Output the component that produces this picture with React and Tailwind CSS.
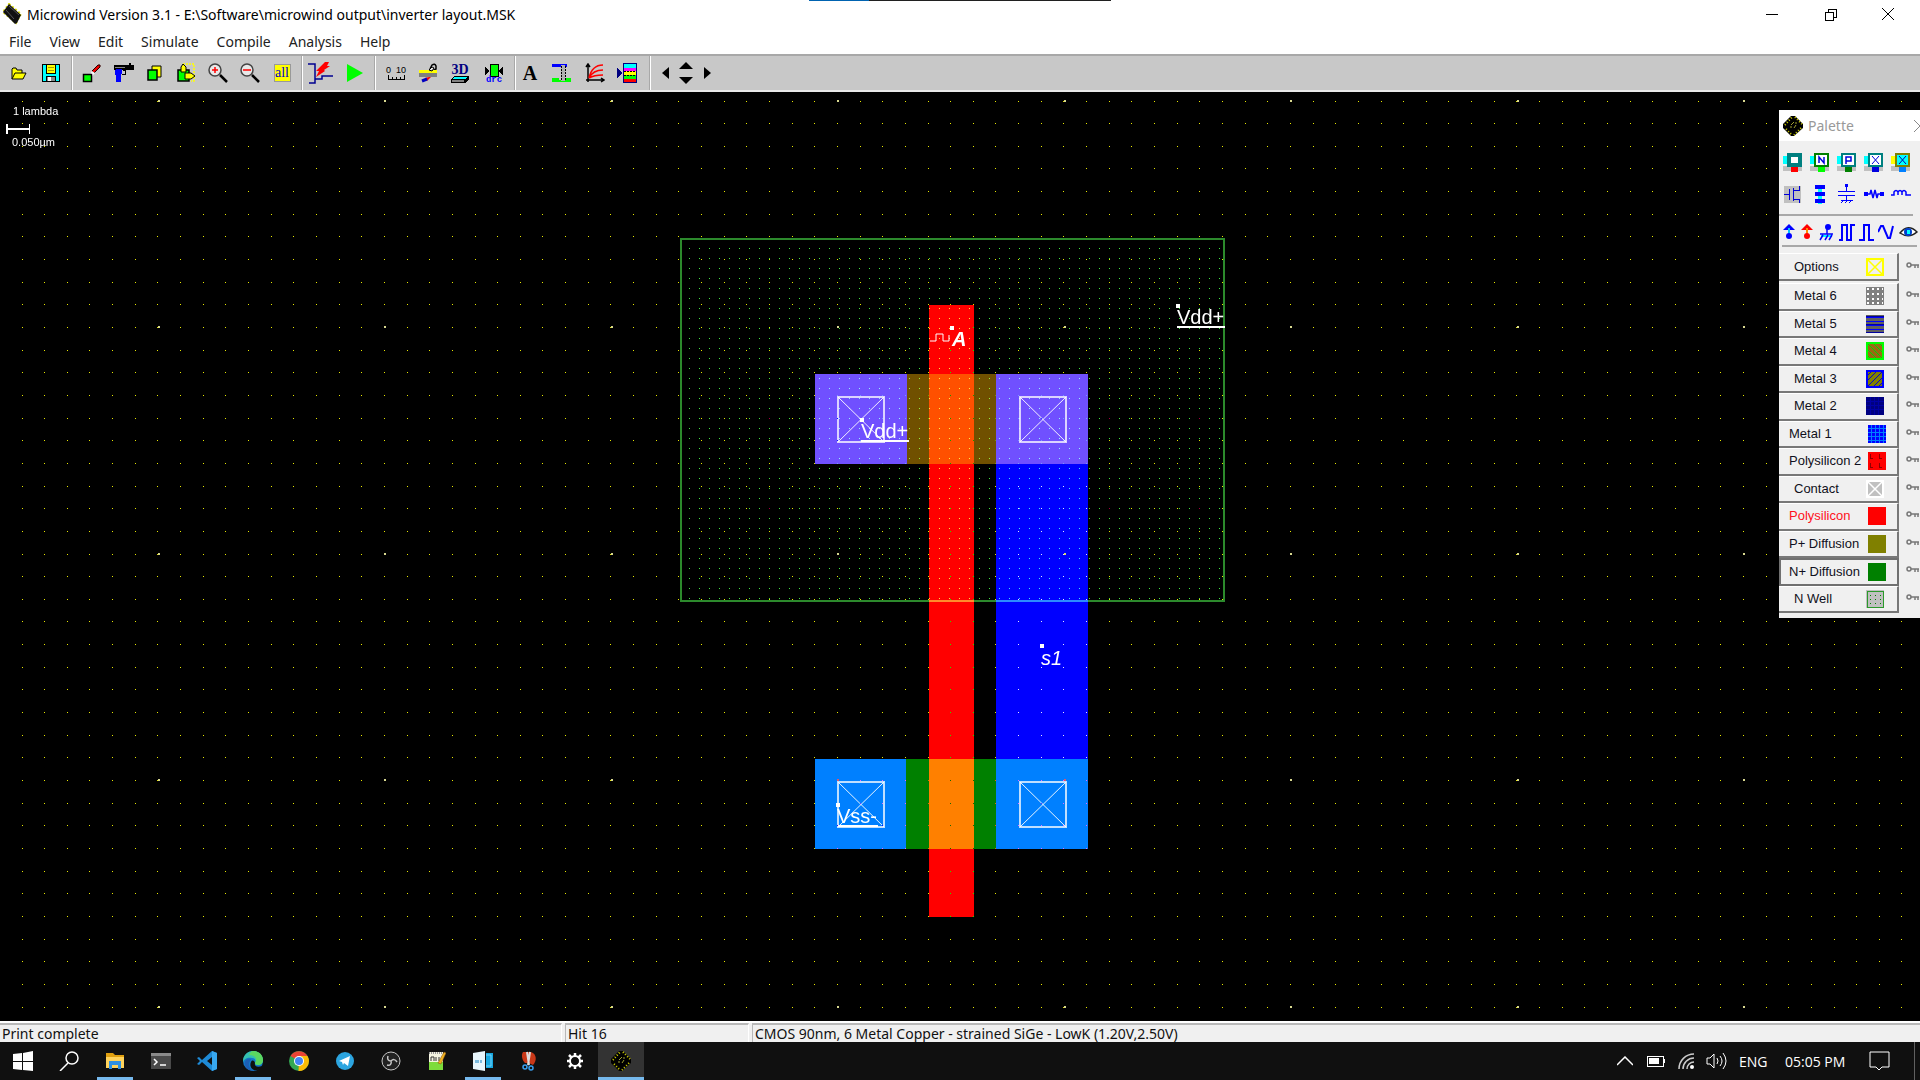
import React from "react";

/* ---------- shared glyphs ---------- */

function ChipIcon({ size = 20 }) {
  return (
    <svg width={size} height={size} viewBox="0 0 20 20" aria-hidden="true">
      <path d="M8 0h4l8 8v4l-9 8H8l-8-8V8z" fill="#000" />
      <path d="M2 9l7-8M12 1l7 7M18 12l-7 7M8 18l-6-6" fill="none" stroke="#d0d000" strokeWidth="2" strokeDasharray="1 2" />
      <path d="M9 3l7 6-6 8-7-7z" fill="#000" />
      <path d="M8 9l3 -3M11 12l2-3M7 11h2M12 7h2" stroke="#a0a030" strokeWidth="1" />
    </svg>
  );
}

function TitleChip() {
  return (
    <svg width="20" height="22" viewBox="0 0 20 22" aria-hidden="true">
      <path d="M7 1l12 10-5 9L1 9z" fill="none" stroke="#d8d800" strokeWidth="2" strokeDasharray="2 2" />
      <path d="M7 1l12 11-4 8-2 1L1 9z" fill="#111" />
      <path d="M7 3l10 9M4 7l8 9" stroke="#555" strokeWidth="1" />
    </svg>
  );
}

const Art = ({ w = 20, h = 20, children, crisp = true }) => (
  <svg width={w} height={h} viewBox={`0 0 ${w} ${h}`} fill="none" shapeRendering={crisp ? "crispEdges" : "auto"} aria-hidden="true">
    {children}
  </svg>
);

/* ---------- toolbar ---------- */

const toolbarGroups = [
  {
    cls: "pl-[3px] w-[71px]",
    items: [
      ["Open", "w-8", (
        <Art w={16} h={16} crisp={false}>
          <path d="M1 14V4l1-1h3l1 2h5v3" fill="#ff0" stroke="#000" />
          <path d="M1 14l3-6h11l-3 6z" fill="#ff0" stroke="#000" />
        </Art>
      )],
      ["Save", "w-8", (
        <Art w={18} h={18}>
          <path d="M0 0h18v18H0z" fill="#000" />
          <path d="M1 1h3v9h10V1h3v16h-3v-5H4v5H1z" fill="#0ff" />
          <path d="M5 1h8v8H5z" fill="#ff0" />
          <path d="M6 3h6v1H6zM6 6h6v1H6z" fill="#a0a000" />
          <path d="M5 13h8v4H5z" fill="#888" />
          <path d="M6 13h3v4H6z" fill="#fff" />
        </Art>
      )],
    ],
  },
  {
    cls: "pl-[3px] w-[228px]",
    items: [
      ["Draw box", "w-8", (
        <Art w={20} h={20} crisp={false}>
          <path d="M10 8l6-6q3-1 2 2l-6 6z" fill="#e00" stroke="#200" strokeWidth="1" />
          <path d="M8 12l2-4 3 2-3 3z" fill="#fff" />
          <path d="M1.500 11.500h8v7h-8z" fill="#0f0" stroke="#000" strokeWidth="1.500" />
        </Art>
      )],
      ["Delete", "w-8", (
        <Art w={20} h={20}>
          <path d="M0 2h15V0h2v2h3v5h-8v1H9V7H0z" fill="#000" />
          <path d="M2 6h6v5H7v8H2v-7H1V8z" fill="#00f" />
          <path d="M8 11h3V8" stroke="#000" />
          <path d="M1 4h10" stroke="#888" />
        </Art>
      )],
      ["Copy", "w-[30px]", (
        <Art w={16} h={18} crisp={false}>
          <path d="M5 2h9v11H5z" fill="#ff0" stroke="#000" />
          <path d="M1 6h9v10H1z" fill="#0f0" stroke="#000" strokeWidth="1.500" />
        </Art>
      )],
      ["Move", "w-8", (
        <Art w={20} h={20} crisp={false}>
          <path d="M2 7h11v11H2z" fill="#0f0" stroke="#000" strokeWidth="1.500" />
          <path d="M7 1h11v17h-3" stroke="#ff0" strokeDasharray="2 1" strokeWidth="1.500" />
          <path d="M5 9V4l2-3 3 3v5z" fill="#ff0" stroke="#000" />
          <path d="M9 10h6l4 3-4 3H9z" fill="#ff0" stroke="#000" />
        </Art>
      )],
      ["Zoom in", "w-8", (
        <Art w={20} h={20} crisp={false}>
          <circle cx="7" cy="7" r="6" fill="#e8e8e8" stroke="#444" strokeWidth="1.500" />
          <path d="M4 7h6M7 4v6" stroke="#f00" strokeWidth="1.500" />
          <path d="M12 12l7 7" stroke="#000" strokeWidth="2.500" />
        </Art>
      )],
      ["Zoom out", "w-8", (
        <Art w={20} h={20} crisp={false}>
          <circle cx="7" cy="7" r="6" fill="#e8e8e8" stroke="#444" strokeWidth="1.500" />
          <path d="M3 7h8" stroke="#f00" strokeWidth="1.500" />
          <path d="M12 12l7 7" stroke="#000" strokeWidth="2.500" />
        </Art>
      )],
      ["View all", "w-8", (
        <span className="flex h-[18px] w-[17px] items-center justify-center border border-[#999] bg-[#ff0] font-['Liberation_Serif',serif] text-[14px] leading-none text-[#0000d0]">all</span>
      )],
    ],
  },
  {
    cls: "w-[71px]",
    items: [
      ["Simulate", "w-9", (
        <Art w={26} h={24} crisp={false}>
          <path d="M0 3h7v19H1M7 18h7v-3h11" stroke="#000090" strokeWidth="1.500" />
          <path d="M17 1l4 0-2 4 3 0-6 4 1 1-9 6 3-6-3 0z" fill="#f00" />
        </Art>
      )],
      ["Run", "w-8", (
        <Art w={18} h={18} crisp={false}>
          <path d="M1 0l16 9-16 9z" fill="#0f0" />
        </Art>
      )],
    ],
  },
  {
    cls: "pl-1 w-[138px]",
    items: [
      ["Measure", "w-8", (
        <span className="flex flex-col items-center whitespace-pre font-['Liberation_Sans',sans-serif] text-[9px] leading-[9px]">
          0  10
          <Art w={18} h={5}><path d="M1 0v4h16V0M5 2v2M9 2v2M13 2v2" stroke="#000" /></Art>
        </span>
      )],
      ["Process section", "w-8", (
        <Art w={20} h={20} crisp={false}>
          <path d="M12 6l2-4q3-2 4 1v3l-4 2" stroke="#000" strokeWidth="1.500" />
          <path d="M7 15l4-1 2 0-4 4z" fill="#f00" />
          <path d="M4 18l5-2" stroke="#0000c0" strokeWidth="3" />
          <path d="M1 7h18v3H1z" fill="#ff0" />
          <path d="M11 7l3-3 2 1-2 3z" fill="#e8e8e8" stroke="#000" />
          <path d="M1 10h18v4H1z" fill="#808080" />
        </Art>
      )],
      ["3D view", "w-8", (
        <span className="flex flex-col items-center">
          <span className="font-['Liberation_Serif',serif] text-[14px] font-bold leading-[13px] text-[#000080]">3D</span>
          <Art w={18} h={7}>
            <path d="M0 3l3-3h15v3l-3 4H0z" fill="#000" />
            <path d="M3 1h13l-2 2H2z" fill="#0ff" />
            <path d="M1 4h12v2H1z" fill="#808080" />
          </Art>
        </span>
      )],
      ["Design rule check", "w-9", (
        <span className="flex flex-col items-center">
          <Art w={18} h={14}>
            <path d="M5 1h8v12H5z" fill="#0f0" stroke="#000" />
            <path d="M0 4l5 4-5 4zM18 4l-5 4 5 4z" fill="#000" />
          </Art>
          <span className="font-['Liberation_Mono',monospace] text-[9px] font-bold leading-[6px] text-[#00f]">drc</span>
        </span>
      )],
    ],
  },
  {
    cls: "w-[133px]",
    items: [
      ["Add text", "w-7", <span className="font-['Liberation_Serif',serif] text-[20px] font-bold leading-none">A</span>],
      ["Via", "w-9", (
        <Art w={20} h={20}>
          <path d="M0 1h15v3H0z" fill="#00f" />
          <path d="M0 15h7v4H0zM13 15h6v4h-6z" fill="#0f0" />
          <path d="M4 17h12v2H4z" fill="#0f0" />
          <path d="M9 2h4v16H9z" fill="#b0b0b0" />
          <path d="M9 3v15M13 3v15" stroke="#000" strokeDasharray="2 1" />
        </Art>
      )],
      ["MOS characteristics", "w-[30px]", (
        <Art w={20} h={20} crisp={false}>
          <path d="M3 19V1M1 4l2-3 2 3M1 17h18M16 15l3 2-3 2" stroke="#000" strokeWidth="1.500" />
          <path d="M4 15Q7 2 18 2M4 15Q8 7 18 7M4 15Q9 12 18 12" stroke="#f00" strokeWidth="1.500" />
        </Art>
      )],
      ["Layers palette", "w-[34px]", (
        <Art w={20} h={20}>
          <path d="M0 5l6 5-6 5z" fill="#000080" />
          <path d="M6 0h14v20H6z" fill="#000080" />
          <path d="M7 1h12v4H7z" fill="#0ff" />
          <path d="M7 5h12v3H7z" fill="#f0f" />
          <path d="M7 8h12v4H7z" fill="#ff0" />
          <path d="M7 12h12v4H7z" fill="#0f0" />
          <path d="M7 16h12v3H7z" fill="#f00" />
          <path d="M7 8h12M7 12h12" stroke="#000" strokeDasharray="2 1" />
        </Art>
      )],
    ],
  },
];

function Toolbar() {
  return (
    <div role="toolbar" aria-label="Main toolbar" className="flex h-[38px] shrink-0 items-stretch border-b-2 border-t-2 border-b-[#e8e8e8] border-t-[#a8a8a8] bg-[#c8c8c8]">
      {toolbarGroups.map((g, i) => (
        <React.Fragment key={i}>
          <div className={`flex items-center ${g.cls}`}>
            {g.items.map(([name, w, icon]) => (
              <button key={name} type="button" aria-label={name} className={`flex h-8 shrink-0 items-center justify-center ${w}`}>
                {icon}
              </button>
            ))}
          </div>
          <div className="w-[2px] border-l border-l-[#a8a8a8] bg-white" />
        </React.Fragment>
      ))}
      <div className="flex items-center pl-1">
        <button type="button" aria-label="Scroll left" className="flex h-8 w-5 items-center justify-center">
          <Art w={7} h={12} crisp={false}><path d="M7 0v12L0 6z" fill="#000" /></Art>
        </button>
        <div className="flex w-[22px] flex-col items-center gap-2">
          <button type="button" aria-label="Scroll up"><Art w={14} h={7} crisp={false}><path d="M0 7h14L7 0z" fill="#000" /></Art></button>
          <button type="button" aria-label="Scroll down"><Art w={14} h={7} crisp={false}><path d="M0 0h14L7 7z" fill="#000" /></Art></button>
        </div>
        <button type="button" aria-label="Scroll right" className="flex h-8 w-5 items-center justify-center">
          <Art w={7} h={12} crisp={false}><path d="M0 0v12l7-6z" fill="#000" /></Art>
        </button>
      </div>
    </div>
  );
}

/* ---------- chip layout drawing ---------- */

// One grid step is a lambda; ten steps span 226.5 px.
const STEP = 453 / 20;
const gridPoint = (origin, k) => Math.floor(origin + k * STEP);

function dotsPath(x0, y0, cols, rows, every, size) {
  let d = "";
  for (let r = 0; r < rows; r += every)
    for (let c = 0; c < cols; c += every)
      d += `M${gridPoint(x0, c)} ${gridPoint(y0, r)}h${size}v${size}h-${size}z`;
  return d;
}
const minorDots = dotsPath(22, 9, 160, 90, 1, 1);
const majorDots = dotsPath(158, 8, 160, 90, 10, 2);

let wellDots = "";
for (let r = 0; r < 36; r++)
  for (let c = 0; c < 54; c++) wellDots += `M${689 + c * 10} ${156 + r * 10}h1v1h-1z`;

function Contact({ x, y }) {
  return (
    <g stroke="#fff" fill="none">
      <path d={`M${x} ${y}l46 45M${x + 46} ${y}l-46 45`} strokeOpacity="0.9" />
      <rect x={x} y={y} width="46" height="45" strokeWidth="2" strokeOpacity="0.75" />
    </g>
  );
}

function ChipLayout() {
  return (
    <svg role="img" aria-label="Inverter layout" className="isolate block h-full w-full font-['Liberation_Sans',Arial,sans-serif] text-[20px]">
      <g shapeRendering="crispEdges">
        <rect x="815" y="282" width="92" height="90" fill="#7050ff" />
        <rect x="907" y="282" width="90" height="90" fill="#705000" />
        <rect x="996" y="372" width="92" height="296" fill="#00f" />
        <rect x="996" y="282" width="92" height="90" fill="#7050ff" />
        <rect x="815" y="667" width="92" height="90" fill="#0080ff" />
        <rect x="906" y="667" width="91" height="90" fill="#008000" />
        <rect x="996" y="667" width="92" height="90" fill="#0080ff" />
        <rect x="929" y="213" width="45" height="612" fill="#f00" />
        <rect x="929" y="282" width="45" height="90" fill="#ff5000" />
        <rect x="929" y="667" width="45" height="90" fill="#ff8000" />
        <path d={wellDots} fill="#40e840" className="mix-blend-screen" />
        <rect x="681" y="147" width="543" height="362" fill="none" stroke="#2c8a2c" strokeWidth="2" className="mix-blend-screen" />
      </g>
      <Contact x={838} y={305} />
      <Contact x={1020} y={305} />
      <Contact x={838} y={690} />
      <Contact x={1020} y={690} />
      <g shapeRendering="crispEdges" className="mix-blend-difference">
        <path d={minorDots} fill="#e8e800" />
        <path d={majorDots} fill="#d8d890" />
      </g>
      <g fill="#fff">
        <text x="1177" y="232">Vdd+</text>
        <path d="M1177 234h48v2h-48zM1176 212h4v4h-4z" />
        <text x="861" y="346">Vdd+</text>
        <path d="M861 348h48v2h-48zM860 326h4v4h-4z" />
        <text x="952" y="254" className="font-bold italic">A</text>
        <path d="M950 234h4v4h-4z" />
        <text x="1041" y="573" className="italic">s1</text>
        <path d="M1040 552h4v4h-4z" />
        <text x="837" y="731">Vss-</text>
        <path d="M838 733h40v2h-40zM836 711h4v4h-4z" />
        <path d="M930 249h6v-7h7v7h6v-6" fill="none" stroke="#fff" />
      </g>
      <g fill="#fff" className="text-[11px]">
        <text x="13" y="23">1 lambda</text>
        <text x="12" y="54">0.050µm</text>
        <path d="M6 32h2v10H6zM29 32h1v10h-1zM7 36h23v2H7z" />
      </g>
    </svg>
  );
}

/* ---------- palette window ---------- */

const blue = "#0000ff";

function ContactTool({ ring, tab, foot, mark, core = "#fff" }) {
  return (
    <Art w={19} h={19}>
      <path d="M0 13h19v5H0z" fill="#c0c0c0" />
      <path d="M0 3h6v8H0z" fill={tab} />
      <path d="M8 14h7v5H8z" fill={foot} />
      <path d="M5 1h13v12H5z" fill={core} stroke={ring} strokeWidth="2" />
      {mark}
    </Art>
  );
}

const toolRows = [
  [
    ["Contact poly / metal", <ContactTool ring="#008080" tab="#0ff" foot="#f00" mark={<path d="M7 3h9v8H7z" stroke="#008080" strokeWidth="2" />} />],
    ["Contact N+ / metal", <ContactTool ring="#008000" tab="#0ff" foot="#0f0" mark={<path d="M9 10V4l5 6V4" stroke="#00d" shapeRendering="auto" strokeWidth="1.500" />} />],
    ["Contact P+ / metal", <ContactTool ring="#008080" tab="#0ff" foot="#008000" mark={<path d="M9 11V4h5v4H9" stroke="#00d" shapeRendering="auto" strokeWidth="1.500" />} />],
    ["Via", <ContactTool ring="#008080" tab="#0ff" foot="#0000e0" mark={<path d="M8 3l7 8M15 3l-7 8" stroke="#00d" shapeRendering="auto" />} />],
    ["Stacked contacts", <ContactTool ring="#808000" tab="#ff0" foot="#0080ff" core="#0ff" mark={<path d="M8 3l7 8M15 3l-7 8" stroke="#00a" shapeRendering="auto" />} />],
  ],
  [
    ["MOS generator", (
      <Art w={19} h={19}>
        <path d="M1 1h17v17H1z" fill="#c0c0c0" />
        <path d="M1 9h5M6 4v11M10 3v13M10 5h6V1M10 14h6v4" stroke="#0000d8" />
      </Art>
    )],
    ["Bus", (
      <Art w={19} h={19}>
        <path d="M8 3h4v16H8z" fill="#0ff" />
        <path d="M5 0h10v4H5zM5 7h10v4H5zM5 14h10v4H5z" fill={blue} />
      </Art>
    )],
    ["Capacitor", (
      <Art w={19} h={20}>
        <path d="M8 0h3v3H8z" fill={blue} />
        <path d="M9 2v5M1 7h17M1 11h17M9 11v5M4 16h12M4 19l3-3M8 19l3-3M12 19l3-3" stroke={blue} />
      </Art>
    )],
    ["Resistor", (
      <Art w={20} h={12} crisp={false}>
        <path d="M0 4h4v4H0zM16 4h4v4h-4z" fill={blue} />
        <path d="M3 6h3l1-4 2 8 2-8 2 8 1-4h3" stroke={blue} strokeWidth="1.500" />
      </Art>
    )],
    ["Inductor", (
      <Art w={20} h={12} crisp={false}>
        <path d="M0 7h3V4q2-3 4 0v3M7 4q2-3 4 0v3M11 4q2-3 4 0v3h5" stroke={blue} strokeWidth="1.500" />
      </Art>
    )],
  ],
];

const signalTools = [
  ["Vdd supply", "w-[19px]", <Art w={12} h={16} crisp={false}><path d="M6 0l6 6H0z" fill={blue} /><path d="M6 4v6" stroke="#00c0ff" strokeWidth="2" /><circle cx="6" cy="12" r="3" fill={blue} /></Art>],
  ["High voltage supply", "w-[18px]", <Art w={12} h={16} crisp={false}><path d="M6 0l6 6H0z" fill="#f00" /><path d="M6 4v6" stroke="#f80" strokeWidth="2" /><circle cx="6" cy="12" r="3" fill="#f00" /></Art>],
  ["Ground", "w-5", <Art w={15} h={17} crisp={false}><circle cx="9" cy="3" r="3" fill={blue} /><path d="M2 12h11" stroke="#0ff" strokeWidth="2" /><path d="M8 5v5M1 10h13M1 16l3-5M6 16l3-5M10 16l3-5" stroke={blue} strokeWidth="1.500" /></Art>],
  ["Clock", "w-[22px]", <Art w={16} h={17}><path d="M0 16h3V1h5v15h4V1h4" stroke={blue} strokeWidth="2" /></Art>],
  ["Pulse", "w-[18px]", <Art w={16} h={17}><path d="M0 16h5V1h5v15h5" stroke={blue} strokeWidth="2" /></Art>],
  ["Sine", "w-5", <Art w={16} h={16} crisp={false}><path d="M0 8l3-6 2 0 5 12 2 0 3-12" stroke={blue} strokeWidth="2" /></Art>],
  ["Visible node", "w-6", <Art w={19} h={12} crisp={false}><path d="M1 7Q9-3 18 6Q10 13 1 7z" fill="#fff" stroke="#222" strokeWidth="1.500" /><circle cx="9" cy="6" r="4" fill="#0040d0" /><path d="M8 4h3v4H8z" fill="#0ff" /></Art>],
];

const wide = "pl-[15px] pr-[13px]";
const tight = "pl-[10px] pr-[11px]";

const Swatch = ({ fill, children }) => (
  <svg width="18" height="18" viewBox="0 0 18 18" shapeRendering="crispEdges" fill="none" aria-hidden="true">
    <path d="M0 0h18v18H0z" fill={fill} />
    {children}
  </svg>
);

const layers = [
  ["Metal 6", wide, (
    <Swatch fill="#808080"><path d="M1 2h16M1 7h16M1 12h16M1 16h16" stroke="#fff" strokeWidth="2" strokeDasharray="2 3" /></Swatch>
  )],
  ["Metal 5", wide, (
    <Swatch fill="#606060"><path d="M0 2h18M0 6h18M0 10h18M0 14h18" stroke="#00f" /><path d="M0 1h18M0 9h18M0 17h18" stroke="#0000a0" /></Swatch>
  )],
  ["Metal 4", wide, (
    <Swatch fill="#9a6a10"><path d="M1 1l16 16M1 7l10 10M1 13l4 4M7 1l10 10M13 1l4 4" stroke="#00d800" strokeWidth="1" shapeRendering="auto" /><path d="M1 1h16v16H1z" stroke="#0f0" strokeWidth="2" /></Swatch>
  )],
  ["Metal 3", wide, (
    <Swatch fill="#808000"><path d="M1 17L17 1M1 11L11 1M7 17L17 7M1 6l5-5M12 17l5-5" stroke="#0000d0" shapeRendering="auto" /><path d="M1 1h16v16H1z" stroke="#00f" strokeWidth="2" /></Swatch>
  )],
  ["Metal 2", wide, (
    <Swatch fill="#000080"><path d="M0 4h18M0 8h18M0 12h18M4 0v18M8 0v18M12 0v18" stroke="#0000a8" /></Swatch>
  )],
  ["Metal 1", tight, (
    <Swatch fill="#0000ff"><path d="M0 3h18M0 7h18M0 11h18M0 15h18M3 0v18M7 0v18M11 0v18M15 0v18" stroke="#0080ff" /></Swatch>
  )],
  ["Polysilicon 2", tight, (
    <Swatch fill="#ff0000"><path d="M2 2v4h3M11 2v4h3M2 11v4h3M11 11v4h3" stroke="#900000" /></Swatch>
  )],
  ["Contact", wide, (
    <Swatch fill="#c0c0c0"><path d="M1 1l16 16M17 1L1 17" stroke="#fff" strokeWidth="1.500" shapeRendering="auto" /><path d="M1 1h16v16H1z" stroke="#fff" strokeWidth="2" /></Swatch>
  )],
  ["Polysilicon", tight, <Swatch fill="#ff0000" />],
  ["P+ Diffusion", tight, <Swatch fill="#808000" />],
  ["N+ Diffusion", tight, <Swatch fill="#008000" />],
  ["N Well", wide, (
    <Swatch fill="#c0c0c0"><path d="M4 5h11M4 9h11M4 13h11" stroke="#008000" strokeDasharray="1 4" strokeWidth="1" /><path d="M1 1h16v16H1z" stroke="#2a9a2a" strokeWidth="1" /></Swatch>
  )],
];

function LayerRow({ label, pad, swatch, selected, focused }) {
  const frame = focused
    ? "outline-2 -outline-offset-2 outline-[#707070] border-2 border-transparent border-l-0"
    : "border-b-2 border-r-2 border-t border-b-[#787878] border-r-[#787878] border-t-[#fff]";
  return (
    <div className="flex min-h-0 flex-1 items-stretch gap-[7px]">
      <button
        type="button"
        aria-pressed={selected}
        className={`flex w-[120px] shrink-0 items-center justify-between bg-[#f0f0f0] text-[13px] leading-4 ${frame} ${pad} ${selected ? "text-[#ff1020]" : "text-[#101020]"}`}
      >
        <span className="whitespace-nowrap">{label}</span>
        {swatch}
      </button>
      <button type="button" aria-label={`Protect ${label}`} className="flex items-center pb-1">
        <Art w={13} h={7} crisp={false}>
          <circle cx="3" cy="3" r="2" stroke="#777" strokeWidth="1.500" />
          <path d="M5 3h8M9 3v3M12 3v3" stroke="#777" strokeWidth="1.500" />
        </Art>
      </button>
    </div>
  );
}

function Palette() {
  return (
    <aside aria-label="Palette" className="absolute right-0 top-[18px] w-[141px] overflow-hidden bg-[#f0f0f0] pb-[5px] font-['Liberation_Sans',Arial,sans-serif]">
      <header className="flex h-[31px] items-center gap-[5px] bg-white pl-1">
        <ChipIcon />
        <h2 className="flex-1 font-['Noto_Sans',sans-serif] text-[14px] leading-5 text-[#999]">Palette</h2>
        <button type="button" aria-label="Close palette" className="-mr-[6px]">
          <Art w={12} h={12} crisp={false}><path d="M0 0l12 12M12 0L0 12" stroke="#888" /></Art>
        </button>
      </header>
      {toolRows.map((row, i) => (
        <div key={i} className="mt-[10px] flex h-[22px] items-center">
          {row.map(([name, icon]) => (
            <button key={name} type="button" aria-label={name} className="flex w-[27px] shrink-0 items-center justify-center">{icon}</button>
          ))}
        </div>
      ))}
      <div className="mr-[7px] mt-[9px] h-[2px] bg-[#a8a8a8]" />
      <div className="mt-[5px] flex h-[22px] items-center">
        {signalTools.map(([name, w, icon]) => (
          <button key={name} type="button" aria-label={name} className={`flex shrink-0 items-center justify-center ${w}`}>{icon}</button>
        ))}
      </div>
      <div className="ml-[3px] mr-[3px] mt-[2px] h-[2px] bg-[#a8a8a8]" />
      <div className="mt-[6px] flex h-[28px] flex-col">
        <LayerRow
          label="Options"
          pad={wide}
          swatch={<Swatch fill="#f0f0f0"><path d="M1 1l16 16M17 1L1 17" stroke="#ff0" strokeWidth="1.500" shapeRendering="auto" /><path d="M1 1h16v16H1z" stroke="#ff0" strokeWidth="2" /></Swatch>}
        />
      </div>
      <div className="mt-[2px] flex h-[330px] flex-col">
        {layers.map(([label, pad, swatch]) => (
          <LayerRow key={label} label={label} pad={pad} swatch={swatch} selected={label === "Polysilicon"} focused={label === "N+ Diffusion"} />
        ))}
      </div>
    </aside>
  );
}

/* ---------- taskbar ---------- */

const taskItems = [
  ["Start", "", (
    <Art w={20} h={20} crisp={false}><path d="M0 3l9-1v8H0zM10 2l10-2v10H10zM0 11h9v8l-9-1zM10 11h10v9l-10-1z" fill="#fff" /></Art>
  )],
  ["Search", "", (
    <Art w={20} h={20} crisp={false}><circle cx="13" cy="7" r="6" stroke="#fff" strokeWidth="1.500" /><path d="M9 12l-8 8" stroke="#fff" strokeWidth="1.500" /></Art>
  )],
  ["File Explorer", "open", (
    <Art w={20} h={18} crisp={false}><path d="M1 1h7l2 2h9v4H1z" fill="#e0a010" /><path d="M1 5h18v11H1z" fill="#ffd35c" /><path d="M4 9h12v8h-3v-4H7v4H4z" fill="#2f8fe0" /></Art>
  )],
  ["Terminal", "", (
    <Art w={20} h={18} crisp={false}><path d="M0 1h20v16H0z" fill="#4a4a4a" /><path d="M0 1h20v3H0z" fill="#8a8a8a" /><path d="M3 7l3 3-3 3M9 13h6" stroke="#fff" strokeWidth="1.500" /></Art>
  )],
  ["Visual Studio Code", "", (
    <Art w={20} h={20} crisp={false}><path d="M15 0l5 2v16l-5 2L5 11l-3 3-2-1 3-3-3-3 2-1 3 3zM15 6l-5 4 5 4z" fill="#1e8ad6" fillRule="evenodd" /><path d="M15 0l5 2v16l-5 2z" fill="#38a8f0" /></Art>
  )],
  ["Microsoft Edge", "open", (
    <svg width="20" height="20" viewBox="0 0 20 20" aria-hidden="true">
      <circle cx="10" cy="10" r="10" fill="#1378c8" />
      <path d="M0 10C0 4 5 0 10 0s10 4 10 9c0 3-2 5-5 5-2 0-3-1-3-2 1-1 1-5-3-5-4-1-9 1-9 5z" fill="#35c1b0" />
      <path d="M10 0c6 0 10 4 10 9 0 3-2 5-5 5-2 0-3-1-3-2 3-4 0-8-6-8 1-2 2-4 4-4z" fill="#5bd860" />
      <path d="M12 12c-1 3 2 5 7 3-1 2-3 4-5 4-5 1-8-4-6-8 1-2 3-2 4 1z" fill="#101010" />
      <path d="M8 9c-4 3-2 9 3 11-6 0-10-4-9-9 1-4 6-4 6-2z" fill="#1c5fb4" />
    </svg>
  )],
  ["Google Chrome", "", (
    <svg width="20" height="20" viewBox="0 0 20 20" aria-hidden="true">
      <circle cx="10" cy="10" r="10" fill="#34a853" />
      <path d="M10 10L1.500 5A10 10 0 0 1 18.500 5z" fill="#ea4335" />
      <path d="M10 10V5h8.500A10 10 0 0 1 9.500 20z" fill="#fbbc05" />
      <circle cx="10" cy="10" r="5" fill="#fff" />
      <circle cx="10" cy="10" r="4" fill="#4285f4" />
    </svg>
  )],
  ["Telegram", "", (
    <Art w={18} h={18} crisp={false}><circle cx="9" cy="9" r="9" fill="#2ca5e0" /><path d="M3 9l11-5-2 10-4-3-1 2-1-3z" fill="#fff" /></Art>
  )],
  ["OBS Studio", "", (
    <Art w={20} h={20} crisp={false}><circle cx="10" cy="10" r="9" fill="#222" stroke="#c8c8c8" strokeWidth="1" /><path d="M10 10c-3 0-4-2-3-5M10 10c2-2 4-2 6 1M10 10c1 3-1 5-4 4" stroke="#c8c8c8" strokeWidth="1.500" /></Art>
  )],
  ["Notepad++", "", (
    <Art w={18} h={20} crisp={false}><path d="M1 1h14v18H1z" fill="#f4f4e0" /><path d="M1 11h14v8H1z" fill="#7ddc3c" /><path d="M3 10V6h3v4M8 6v4M11 6v4" stroke="#333" /><path d="M10 12l6-11 2 1-5 11z" fill="#f0b020" stroke="#805010" strokeWidth="0.500" /><path d="M1 2h14" stroke="#999" strokeDasharray="1 1" strokeWidth="2" /></Art>
  )],
  ["Notes", "open", (
    <Art w={20} h={20} crisp={false}><path d="M0 2l12-2v20L0 18z" fill="#e8f6fc" /><path d="M13 2h7v15h-7z" fill="#18a8e0" /><path d="M3 9v3M5 9v3M8 9v3" stroke="#1080c0" /><path d="M13 4h5v11h-5" stroke="#70d0f8" /></Art>
  )],
  ["Snip", "", (
    <Art w={16} h={20} crisp={false}><path d="M2 1h8c6 2 6 9 2 13l-4-2-4 0C1 9 0 4 2 1z" fill="#c83818" /><path d="M6 1l2 13M9 1L7 14" stroke="#ddd" strokeWidth="2" /><circle cx="4" cy="16" r="2" stroke="#3aa0f0" strokeWidth="1.500" /><circle cx="10" cy="17" r="2" stroke="#3aa0f0" strokeWidth="1.500" /></Art>
  )],
  ["Settings", "", (
    <Art w={16} h={16} crisp={false}><circle cx="8" cy="8" r="5" stroke="#fff" strokeWidth="2" /><path d="M8 0v3M8 13v3M0 8h3M13 8h3M2 2l3 3M11 11l3 3M14 2l-3 3M5 11l-3 3" stroke="#fff" strokeWidth="2.500" /></Art>
  )],
  ["Microwind", "active", <ChipIcon size={20} />],
];

function Taskbar() {
  return (
    <footer className="flex h-[38px] shrink-0 items-stretch bg-[#101010] font-['Open_Sans',sans-serif] text-[14px] text-white">
      {taskItems.map(([name, state, icon]) => (
        <button key={name} type="button" aria-label={name} className={`relative flex w-[46px] shrink-0 items-center justify-center ${state === "active" ? "bg-[#333]" : ""}`}>
          {icon}
          {state === "open" && <span className="absolute inset-x-[5px] bottom-0 h-[3px] bg-[#76b9ed]" />}
          {state === "active" && <span className="absolute inset-x-0 bottom-0 h-[3px] bg-[#76b9ed]" />}
        </button>
      ))}
      <div className="ml-auto flex items-center">
        <button type="button" aria-label="Show hidden icons" className="mr-[13px]">
          <Art w={16} h={10} crisp={false}><path d="M0 9l8-8 8 8" stroke="#fff" strokeWidth="1.500" /></Art>
        </button>
        <button type="button" aria-label="Battery" className="mr-3">
          <Art w={20} h={12}><path d="M1 1h16v10H1zM18 4v4" stroke="#fff" /><path d="M3 3h10v6H3z" fill="#fff" /></Art>
        </button>
        <button type="button" aria-label="Network" className="mr-3">
          <Art w={16} h={16} crisp={false}><path d="M1 16A15 15 0 0 1 16 1M5 16A11 11 0 0 1 16 5M9 16A7 7 0 0 1 16 9" stroke="#ccc" strokeWidth="1.500" /><circle cx="14" cy="14" r="2" fill="#fff" /></Art>
        </button>
        <button type="button" aria-label="Volume" className="mr-3">
          <Art w={21} h={18} crisp={false}><path d="M1 6h3l4-4v14l-4-4H1zM11 6q2 3 0 6M14 4q4 5 0 10M17 1q6 8 0 16" stroke="#fff" /></Art>
        </button>
        <button type="button" className="w-[46px] text-left">ENG</button>
        <time className="w-[84px] whitespace-nowrap">05:05 PM</time>
        <button type="button" aria-label="Notifications" className="mr-6">
          <Art w={21} h={20} crisp={false}><path d="M1 1h19v15h-7l-3 3-3-3H1z" stroke="#fff" /></Art>
        </button>
        <div className="mr-[5px] h-[38px] w-px bg-[#606060]" />
      </div>
    </footer>
  );
}

/* ---------- application window ---------- */

const menus = ["File", "View", "Edit", "Simulate", "Compile", "Analysis", "Help"];

export default function App() {
  return (
    <div className="flex h-screen flex-col overflow-hidden bg-white font-['Noto_Sans',sans-serif] text-[14px] text-black">
      <header className="relative flex h-7 shrink-0 items-center">
        <span className="absolute inset-x-0 top-0 mx-auto flex h-px w-[302px]">
          <span className="w-1/5 bg-[#0063b1]" />
          <span className="flex-1 bg-[#202020]" />
        </span>
        <span className="flex items-center gap-[5px] pl-[2px]">
          <TitleChip />
          <h1 className="whitespace-nowrap">Microwind Version 3.1 - E:\Software\microwind output\inverter layout.MSK</h1>
        </span>
        <div className="ml-auto flex h-full items-center">
          <button type="button" aria-label="Minimize" className="flex w-[58px] justify-center"><Art w={12} h={12}><path d="M0 6h12" stroke="#000" /></Art></button>
          <button type="button" aria-label="Restore" className="flex w-[58px] justify-center"><Art w={13} h={13}><path d="M1 4h8v8H1zM4 4V1h8v8H9" stroke="#000" /></Art></button>
          <button type="button" aria-label="Close" className="mr-[3px] flex w-[58px] justify-center"><Art w={12} h={12} crisp={false}><path d="M0 0l12 12M12 0L0 12" stroke="#000" /></Art></button>
        </div>
      </header>
      <nav aria-label="Menu" className="flex h-[26px] shrink-0 items-center">
        {menus.map((m) => (
          <button key={m} type="button" className="px-[9px] text-[#222]">{m}</button>
        ))}
      </nav>
      <Toolbar />
      <main className="relative min-h-0 flex-1 overflow-hidden bg-black">
        <ChipLayout />
        <Palette />
      </main>
      <div role="status" className="flex h-[21px] shrink-0 gap-[3px] border-t-2 border-t-white bg-[#f0f0f0] leading-[18px] text-[#111]">
        <span className="w-[562px] border-r border-t-2 border-r-white border-t-[#b8b8b8] pl-[2px]">Print complete</span>
        <span className="w-[184px] border-l border-r border-t-2 border-l-[#b8b8b8] border-r-white border-t-[#b8b8b8] pl-[2px]">Hit 16</span>
        <span className="flex-1 border-l border-t-2 border-l-[#b8b8b8] border-t-[#b8b8b8] pl-[2px]">CMOS 90nm, 6 Metal Copper - strained SiGe - LowK (1.20V,2.50V)</span>
      </div>
      <Taskbar />
    </div>
  );
}
